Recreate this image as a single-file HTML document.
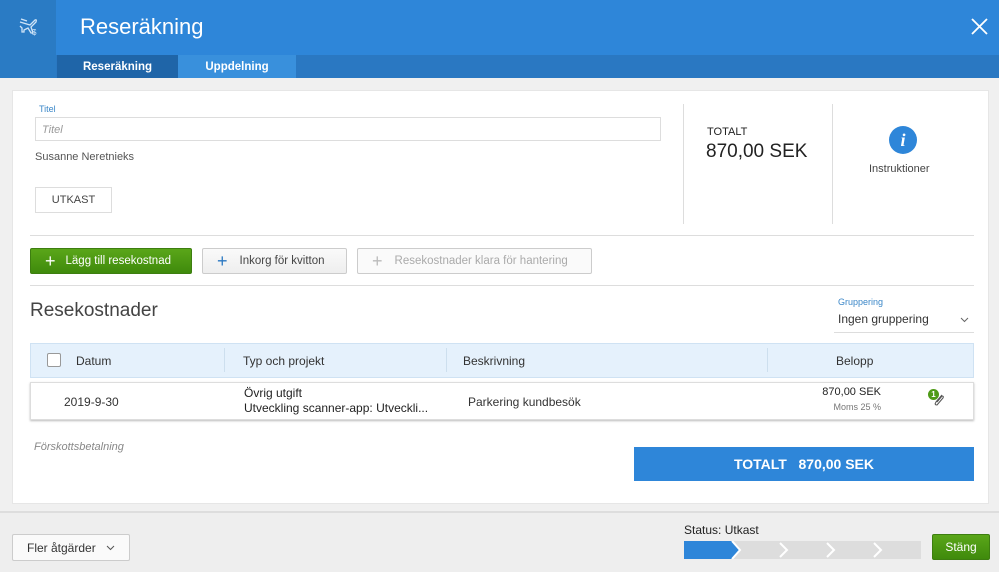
<!DOCTYPE html>
<html><head><meta charset="utf-8"><style>
*{box-sizing:border-box;margin:0;padding:0}
body{width:999px;height:572px;overflow:hidden;background:#f0f0f0;font-family:"Liberation Sans",sans-serif;color:#333;position:relative}
.a{position:absolute}
.btn{position:absolute;height:26px;border:1px solid #ccc;border-radius:2px;background:linear-gradient(#fafafa,#eee);font-size:12px;display:flex;align-items:center}
</style></head><body>
<div class="a" style="left:0;top:0;width:999px;height:78px;background:#2e86d9"></div>
<div class="a" style="left:0;top:0;width:56px;height:78px;background:#2a7bc4"></div>
<svg class="a" style="left:18px;top:16px" width="22" height="20" viewBox="0 0 22 20"><path d="M2 6 L12 9 L17 4 Q19 3 18 6 L13 11 L15 17 L13 17 L10 12 L6 14 L6 16 L4 16 L4 12 L2 10 M3 3 L9 5" stroke="#cfe4f7" stroke-width="1.3" fill="none"/><text x="14" y="19" font-size="8" fill="#cfe4f7" font-family="Liberation Sans">$</text></svg>
<div class="a" style="left:56px;top:55px;width:943px;height:23px;background:#2a78c2"></div>
<div class="a" style="left:80px;top:14px;font-size:22px;color:#fff">Reseräkning</div>
<div class="a" style="left:57px;top:55px;width:121px;height:23px;background:#1f65a8;color:#fff;font-size:11.5px;font-weight:bold;text-align:center;line-height:25px">Reseräkning</div>
<div class="a" style="left:178px;top:55px;width:118px;height:23px;background:#3990dc;color:#fff;font-size:11.5px;font-weight:bold;text-align:center;line-height:25px">Uppdelning</div>
<svg class="a" style="left:971px;top:18px" width="17" height="17" viewBox="0 0 17 17"><path d="M1 1 L16 16 M16 1 L1 16" stroke="#fff" stroke-width="1.8"/></svg>

<div class="a" style="left:12px;top:90px;width:977px;height:414px;background:#fff;border:1px solid #e6e6e6"></div>
<div class="a" style="left:39px;top:104px;font-size:9px;color:#3b87c8">Titel</div>
<div class="a" style="left:35px;top:117px;width:626px;height:24px;border:1px solid #ddd;font-size:11px;font-style:italic;color:#999;padding:6px 6px">Titel</div>
<div class="a" style="left:35px;top:151px;font-size:11px;color:#555">Susanne Neretnieks</div>
<div class="a" style="left:35px;top:187px;width:77px;height:26px;border:1px solid #ddd;font-size:11px;color:#444;text-align:center;line-height:24px">UTKAST</div>
<div class="a" style="left:683px;top:104px;width:1px;height:120px;background:#ddd"></div>
<div class="a" style="left:832px;top:104px;width:1px;height:120px;background:#ddd"></div>
<div class="a" style="left:707px;top:126px;font-size:11px;color:#222">TOTALT</div>
<div class="a" style="left:706px;top:141px;font-size:19px;color:#222">870,00 SEK</div>
<div class="a" style="left:889px;top:126px;width:28px;height:28px;border-radius:50%;background:#2e86d9;color:#fff;font-style:italic;font-weight:bold;font-family:'Liberation Serif',serif;font-size:18px;text-align:center;line-height:28px">i</div>
<div class="a" style="left:869px;top:163px;font-size:11px;color:#444">Instruktioner</div>
<div class="a" style="left:30px;top:235px;width:944px;height:1px;background:#ddd"></div>

<div class="btn" style="left:30px;top:248px;width:162px;background:linear-gradient(#5aa619,#3f8a0c);border-color:#3d7e10;color:#fff;font-size:11.5px"><span style="font-size:18px;margin:0 10px 0 14px">+</span>Lägg till resekostnad</div>
<div class="btn" style="left:202px;top:248px;width:145px;color:#444;font-size:11.5px"><span style="font-size:18px;margin:0 12px 0 14px;color:#2a78c2">+</span>Inkorg för kvitton</div>
<div class="btn" style="left:357px;top:248px;width:235px;color:#aaa;background:#fafafa;font-size:11.5px"><span style="font-size:18px;margin:0 12px 0 14px;color:#bbb">+</span>Resekostnader klara för hantering</div>
<div class="a" style="left:30px;top:285px;width:944px;height:1px;background:#ddd"></div>

<div class="a" style="left:30px;top:300px;font-size:19px;color:#444">Resekostnader</div>
<div class="a" style="left:838px;top:297px;font-size:9px;color:#3b87c8">Gruppering</div>
<div class="a" style="left:834px;top:312px;width:140px;height:21px;border-bottom:1px solid #ddd;font-size:12px;color:#333;padding-left:4px">Ingen gruppering<svg style="position:absolute;right:5px;top:5px" width="9" height="6" viewBox="0 0 9 6"><path d="M1 1 L4.5 4.5 L8 1" stroke="#666" fill="none"/></svg></div>

<div class="a" style="left:30px;top:343px;width:944px;height:35px;background:#e5f1fc;border:1px solid #cfe2f3"></div>
<div class="a" style="left:47px;top:353px;width:14px;height:14px;border:1px solid #999;background:#fff;border-radius:2px"></div>
<div class="a" style="left:76px;top:354px;font-size:12px;color:#333">Datum</div>
<div class="a" style="left:224px;top:348px;width:1px;height:24px;background:#cddfee"></div>
<div class="a" style="left:243px;top:354px;font-size:12px;color:#333">Typ och projekt</div>
<div class="a" style="left:446px;top:348px;width:1px;height:24px;background:#cddfee"></div>
<div class="a" style="left:463px;top:354px;font-size:12px;color:#333">Beskrivning</div>
<div class="a" style="left:767px;top:348px;width:1px;height:24px;background:#cddfee"></div>
<div class="a" style="left:836px;top:354px;font-size:12px;color:#333">Belopp</div>

<div class="a" style="left:30px;top:382px;width:944px;height:38px;background:#fff;border:1px solid #ddd;box-shadow:0 1px 2px #bbb"></div>
<div class="a" style="left:64px;top:395px;font-size:12px;color:#333">2019-9-30</div>
<div class="a" style="left:244px;top:386px;font-size:12px;color:#222;line-height:15px">Övrig utgift<br>Utveckling scanner-app: Utveckli...</div>
<div class="a" style="left:468px;top:395px;font-size:12px;color:#333">Parkering kundbesök</div>
<div class="a" style="left:780px;top:386px;width:101px;text-align:right;font-size:11px;color:#222">870,00 SEK</div>
<div class="a" style="left:780px;top:402px;width:101px;text-align:right;font-size:9px;color:#777">Moms 25 %</div>
<div class="a" style="left:928px;top:389px;width:11px;height:11px;border-radius:50%;background:#4e9a16;color:#fff;font-size:8px;font-weight:bold;text-align:center;line-height:11px">1</div>
<svg class="a" style="left:933px;top:393px" width="12" height="14" viewBox="0 0 12 14"><path d="M9 2 L3 9 Q1 12 4 12 L10 5 Q11 3 9 3 L4 9" stroke="#555" stroke-width="1.1" fill="none"/></svg>

<div class="a" style="left:34px;top:441px;font-size:11px;font-style:italic;color:#888">Förskottsbetalning</div>
<div class="a" style="left:634px;top:447px;width:340px;height:34px;background:#2e86d9;color:#fff;font-weight:bold;font-size:14px;text-align:center;line-height:34px">TOTALT&nbsp;&nbsp;&nbsp;870,00 SEK</div>

<div class="a" style="left:0;top:511px;width:999px;height:61px;background:#eee;border-top:2px solid #ddd"></div>
<div class="btn" style="left:12px;top:534px;width:118px;height:27px;background:#fafafa;color:#333;font-size:12px;padding-left:14px">Fler åtgärder<svg style="margin-left:10px" width="9" height="6" viewBox="0 0 9 6"><path d="M1 1 L4.5 4.5 L8 1" stroke="#555" fill="none"/></svg></div>
<div class="a" style="left:684px;top:523px;font-size:12px;color:#222">Status: Utkast</div>
<div class="a" style="left:684px;top:541px;width:237px;height:18px;background:#ddd"></div>
<svg class="a" style="left:684px;top:541px" width="237" height="18" viewBox="0 0 237 18"><path d="M0 0 H48 L56 9 L48 18 H0Z" fill="#2e86d9"/><path d="M48 0 L56 9 L48 18" stroke="#fff" stroke-width="2" fill="none"/><path d="M96 2 L103 9 L96 16 M143 2 L150 9 L143 16 M190 2 L197 9 L190 16" stroke="#fff" stroke-width="2" fill="none"/></svg>
<div class="btn" style="left:932px;top:534px;width:58px;height:26px;background:linear-gradient(#5aa619,#3f8a0c);border-color:#3d7e10;color:#fff;justify-content:center">Stäng</div>
</body></html>
